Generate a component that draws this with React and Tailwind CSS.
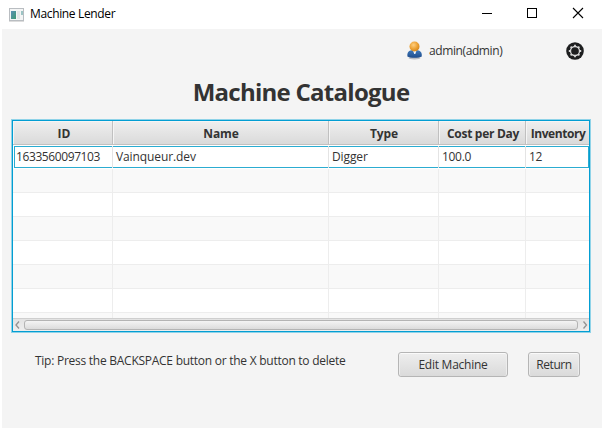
const columns = [
  { label: "ID", value: "1633560097103", cls: "w-[100px]", head: "pl-[3px]", text: "tracking-[-0.4px]" },
  { label: "Name", value: "Vainqueur.dev", cls: "w-[216px]", head: "pl-px", text: "tracking-[-0.1px]" },
  { label: "Type", value: "Digger", cls: "w-[110px]", head: "pl-px", text: "tracking-[-0.1px]" },
  { label: "Cost per Day", value: "100.0", cls: "w-[87px]", head: "pl-[2px]", text: "tracking-[-0.3px]" },
  { label: "Inventory", value: "12", cls: "w-[63px]", head: "pl-px", text: "tracking-[-0.45px]" },
];

const emptyRows = [0, 1, 2, 3, 4, 5, 6];

function AppIcon() {
  return (
    <svg width="16" height="14" viewBox="0 0 16 14" className="ml-[9px] shrink-0">
      <defs>
        <linearGradient id="pane" x1="0" y1="0" x2="1" y2="1">
          <stop offset="0" stopColor="#5b8fb5" />
          <stop offset="1" stopColor="#3f9a72" />
        </linearGradient>
      </defs>
      <rect x="0.5" y="0.5" width="14" height="12" fill="#f4f5f5" stroke="#b9bdc1" />
      <path d="M0 13.5H15" stroke="#dcdcdc" />
      <rect x="2" y="3" width="5" height="8" fill="url(#pane)" />
      <rect x="8" y="3" width="3" height="8" fill="#e4e6e7" />
      <rect x="12" y="3" width="2" height="4" fill="#9cc4c4" />
    </svg>
  );
}

function UserIcon() {
  return (
    <svg width="16" height="19" viewBox="0 0 16 19" className="shrink-0">
      <defs>
        <radialGradient id="head" cx="0.4" cy="0.35" r="0.65">
          <stop offset="0" stopColor="#ffcf80" />
          <stop offset="0.6" stopColor="#eda336" />
          <stop offset="1" stopColor="#d5881f" />
        </radialGradient>
        <linearGradient id="coat" x1="0" y1="0" x2="0" y2="1">
          <stop offset="0" stopColor="#3f78b8" />
          <stop offset="1" stopColor="#1e4c8c" />
        </linearGradient>
      </defs>
      <ellipse cx="7.5" cy="17" rx="6" ry="1.4" fill="#b9bcc2" />
      <path d="M.4 15.5C0 12 1.200 9.700 4 9.300H11C13.800 9.700 15.200 12 14.800 15.500 12 17.200 3 17.200 .4 15.500Z" fill="url(#coat)" />
      <path d="M6 9.500H9.500L8.300 13H7.200Z" fill="#f2f5fa" />
      <circle cx="7.500" cy="5.500" r="5" fill="url(#head)" />
    </svg>
  );
}

function GearIcon() {
  return (
    <svg width="18" height="18" viewBox="0 0 18 18" className="shrink-0">
      <circle cx="9" cy="9" r="8.800" fill="#1d1e1f" />
      <circle cx="9" cy="9" r="4.500" fill="none" stroke="#d8d8d8" strokeWidth="1.300" />
      <path
        d="M9 2.800V4.600M9 13.400V15.200M2.800 9H4.600M13.400 9H15.200M4.600 4.600L5.900 5.900M12.100 12.100L13.400 13.400M4.600 13.400L5.900 12.100M12.100 5.900L13.400 4.600"
        stroke="#d8d8d8"
        strokeWidth="1.800"
      />
    </svg>
  );
}

function Button({ className, children }) {
  return (
    <button
      className={
        "h-[25px] shrink-0 rounded-[3px] border border-[#b5b5b5] bg-linear-to-b from-[#eeeeee] to-[#dadada] text-xs leading-[23px] whitespace-nowrap text-[#333] shadow-[inset_0_1px_0_#fafafa,inset_1px_0_0_#ededed,inset_-1px_0_0_#ededed] " +
        className
      }
    >
      {children}
    </button>
  );
}

function MachineTable() {
  return (
    <div className="ml-[10px] flex h-[212px] w-[578px] flex-col overflow-hidden border border-[#039ed3] bg-white shadow-[0_0_0_1px_#8fd3e8]">
      <div className="flex h-6 shrink-0 border-b border-[#c1c1c1] bg-linear-to-b from-[#efefef] to-[#dadada]">
        {columns.map((c) => (
          <div
            key={c.label}
            className={
              "flex shrink-0 items-center justify-center border-r border-[#c0c0c0] pt-[3px] text-xs leading-4 font-bold whitespace-nowrap shadow-[inset_1px_1px_0_#f5f5f5] last:border-r-0 " +
              c.cls + " " + c.head + " " + (c.label === "ID" ? "" : c.text)
            }
          >
            {c.label}
          </div>
        ))}
      </div>
      <div className="flex h-6 shrink-0 bg-white py-px pl-px">
        <div className="flex h-[22px] w-[575px] border border-[#2bacd1]">
          {columns.map((c, i) => (
            <div
              key={c.label}
              className={
                "-my-px flex shrink-0 items-center border-r border-[#e4e4e4] text-xs leading-4 whitespace-nowrap last:w-[60px] last:border-r-0 " +
                (i === 0 ? "w-[98px] pl-px " : "pl-[3px] " + c.cls + " ") + c.text
              }
            >
              {c.value}
            </div>
          ))}
        </div>
      </div>
      <div className="flex h-[149px] shrink-0 flex-col overflow-hidden">
        {emptyRows.map((r) => (
          <div key={r} className="flex h-6 shrink-0 border-b border-[#ededed] odd:bg-[#f9f9f9]">
            {columns.map((c) => (
              <div key={c.label} className={"shrink-0 border-r border-[#ededed] last:border-r-0 " + c.cls} />
            ))}
          </div>
        ))}
      </div>
      <div className="flex h-[13px] shrink-0 items-center border-t border-[#cfcfcf] bg-linear-to-b from-[#e3e3e3] to-[#eeeeee]">
        <svg width="11" height="12" viewBox="0 0 11 12" fill="none" stroke="#929292" strokeWidth="1.300">
          <path d="M6 2.500L3 6L6 9.500" />
        </svg>
        <div className="h-[10px] w-[554px] rounded-[3px] border border-[#b4b4b4] bg-linear-to-b from-[#f4f4f4] to-[#dcdcdc]" />
        <svg width="11" height="12" viewBox="0 0 11 12" fill="none" stroke="#929292" strokeWidth="1.300">
          <path d="M5.500 2.500L8.500 6L5.500 9.500" />
        </svg>
      </div>
    </div>
  );
}

export default function App() {
  return (
    <div className="flex h-[428px] w-[602px] flex-col overflow-hidden bg-white font-['Open_Sans','Noto_Sans',sans-serif] text-[#333]">
      <header className="flex h-[29px] shrink-0 items-center">
        <AppIcon />
        <span className="ml-[5px] pb-px text-xs leading-4 tracking-[-0.35px] whitespace-nowrap text-black">Machine Lender</span>
        <svg width="104" height="12" viewBox="0 0 104 12" fill="none" stroke="#000" className="mt-[-3px] ml-auto mr-[16px]">
          <path d="M0 6.500H10" />
          <rect x="45.500" y="1.500" width="9" height="9" />
          <path d="M91 1L101 11M101 1L91 11" strokeWidth="1.100" />
        </svg>
      </header>
      <main className="ml-[2px] flex flex-1 flex-col bg-[#f4f4f4]">
        <div className="flex h-[42px] shrink-0 items-center pl-[405px]">
          <UserIcon />
          <span className="ml-[6px] pt-px text-xs leading-4 tracking-[-0.4px] whitespace-nowrap">admin(admin)</span>
          <div className="mr-[18px] ml-auto pt-px">
            <GearIcon />
          </div>
        </div>
        <h1 className="h-[49px] shrink-0 pr-[2px] text-center text-2xl leading-[42px] font-bold tracking-[-0.73px] whitespace-nowrap">Machine Catalogue</h1>
        <MachineTable />
        <div className="flex pt-5 pl-[33px]">
          <p className="w-[363px] pt-px text-xs leading-4 tracking-[-0.26px] whitespace-nowrap">Tip: Press the BACKSPACE button or the X button to delete</p>
          <Button className="w-[110px] tracking-[-0.25px]">Edit Machine</Button>
          <Button className="ml-5 w-[52px] px-0 tracking-[-0.4px]">Return</Button>
        </div>
      </main>
    </div>
  );
}
